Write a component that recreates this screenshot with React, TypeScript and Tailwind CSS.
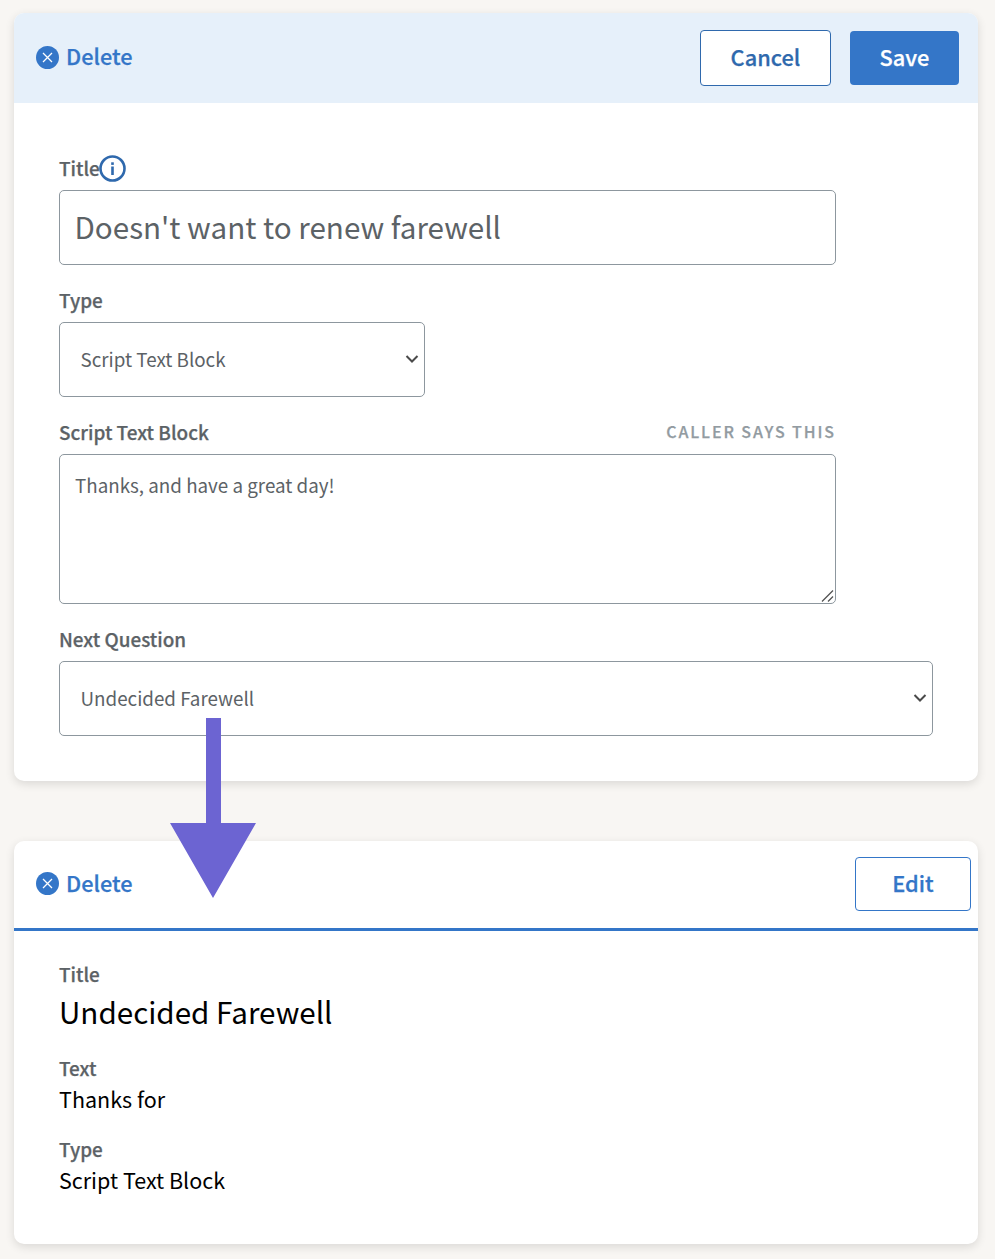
import type { ReactNode } from 'react';

const fontStack = '[font-family:"Noto_Sans_CJK_SC","Noto_Sans",sans-serif]';
const heavier = 'font-medium [-webkit-text-stroke:0.25px]';

const DeleteLink = () => (
  <button className={`mb-[2px] flex items-center gap-[7px] text-[21.7px] leading-[30px] text-[#3476c8] ${heavier}`}>
    <svg width="23" height="23" viewBox="0 0 23 23" aria-hidden="true">
      <circle cx="11.5" cy="11.5" r="11.5" fill="#3476c8" />
      <path d="M7 7l9 9M16 7l-9 9" stroke="#fff" strokeWidth="1.3" fill="none" />
    </svg>
    <span className="pb-[2px]">Delete</span>
  </button>
);

const Label = ({ children }: { children: ReactNode }) => (
  <label className={`block text-[18.9px] leading-[27px] text-[#5c6266] ${heavier}`}>{children}</label>
);

const fieldClass =
  'block h-[75px] rounded-[5px] border border-[#8d979e] bg-white text-[#5c6266] outline-none';

const Select = ({ width, value }: { width: string; value: string }) => (
  <div className={`relative ${width}`}>
    <select className={`${fieldClass} w-full appearance-none px-[20.5px] text-[18.8px]`} defaultValue={value}>
      <option value={value}>{value}</option>
    </select>
    <svg
      className="pointer-events-none absolute right-[6px] top-[32px]"
      width="14"
      height="10"
      viewBox="0 0 14 10"
      aria-hidden="true"
    >
      <path d="M1.5 2l5.5 5.5L12.5 2" fill="none" stroke="#4a4a4a" strokeWidth="2" />
    </svg>
  </div>
);

export default function App() {
  return (
    <div className={`${fontStack} relative min-h-[1259px] bg-[#f8f6f3] pl-[14px] pr-[17px] pt-[13px]`}>
      <section className="overflow-hidden rounded-[10px] bg-white pb-[45px] shadow-[0_3px_10px_rgba(0,0,0,0.12)]">
        <header className="flex h-[90px] items-center justify-between bg-[#e6f0fa] pl-[22px] pr-[19px]">
          <DeleteLink />
          <div className="flex items-center gap-[19px]">
            <button className={`h-[56px] w-[131px] rounded-[4px] border border-[#2f69ad] bg-white pb-[2px] text-[21.8px] text-[#2f69ad] ${heavier}`}>
              Cancel
            </button>
            <button className={`h-[54px] w-[109px] rounded-[4px] bg-[#3476c8] pb-[2px] text-[21.8px] text-white ${heavier}`}>
              Save
            </button>
          </div>
        </header>

        <form className="px-[45px] pt-[52px]">
          <div className="mb-[8px] flex h-[27px] items-start">
            <div className="-mr-[1px] -mt-[1px]">
              <Label>Title</Label>
            </div>
            <svg width="27" height="27" viewBox="0 0 27 27" aria-hidden="true">
              <circle cx="13.5" cy="13.5" r="12" fill="none" stroke="#2f69ad" strokeWidth="2.6" />
              <rect x="12.2" y="11.5" width="2.6" height="8.5" fill="#2f69ad" />
              <rect x="12.2" y="7.3" width="2.6" height="2.6" fill="#2f69ad" />
            </svg>
          </div>
          <input
            className={`${fieldClass} w-[777px] px-[14.5px] pb-[2px] text-[29.6px]`}
            defaultValue="Doesn't want to renew farewell"
          />

          <div className="mb-[9px] mt-[21px]">
            <Label>Type</Label>
          </div>
          <Select width="w-[366px]" value="Script Text Block" />

          <div className="mb-[9px] mt-[21px] flex w-[777px] items-center justify-between">
            <Label>Script Text Block</Label>
            <span className={`pb-[2px] text-[16px] tracking-[1.9px] text-[#929ba1] ${heavier}`}>CALLER SAYS THIS</span>
          </div>
          <div className="relative w-[777px]">
            <textarea
              className={`${fieldClass} h-[150px]! w-full resize-none px-[15px] py-[15px] text-[18.8px] leading-[30px]`}
              defaultValue="Thanks, and have a great day!"
            />
            <svg
              className="pointer-events-none absolute bottom-[1px] right-[1px]"
              width="14"
              height="14"
              viewBox="0 0 14 14"
              aria-hidden="true"
            >
              <path d="M1 12.5L12 1.5M7 12.5L12 7.5" fill="none" stroke="#555" strokeWidth="1.3" />
            </svg>
          </div>

          <div className="mb-[9px] mt-[21px]">
            <Label>Next Question</Label>
          </div>
          <Select width="w-[874px]" value="Undecided Farewell" />
        </form>
      </section>

      <section className="mt-[60px] overflow-hidden rounded-[10px] bg-white pb-[48px] shadow-[0_3px_10px_rgba(0,0,0,0.12)]">
        <header className="flex h-[90px] items-center justify-between border-b-[3px] border-[#3476c8] pl-[22px] pr-[7px]">
          <DeleteLink />
          <button className={`mb-[1px] h-[54px] w-[116px] rounded-[4px] border border-[#3476c8] bg-white pb-[2px] text-[21.8px] text-[#3476c8] ${heavier}`}>
            Edit
          </button>
        </header>
        <div className="pl-[45px] pt-[29px] text-black">
          <Label>Title</Label>
          <p className="mt-[4px] text-[29.6px] leading-[42px]">Undecided Farewell</p>
          <div className="mt-[21px]">
            <Label>Text</Label>
          </div>
          <p className="mt-[2px] text-[21.5px] leading-[32px]">Thanks for</p>
          <div className="mt-[20px]">
            <Label>Type</Label>
          </div>
          <p className="mt-[2px] text-[21.5px] leading-[32px]">Script Text Block</p>
        </div>
      </section>

      <svg
        className="absolute left-[170px] top-[718px]"
        width="86"
        height="180"
        viewBox="0 0 86 180"
        aria-hidden="true"
      >
        <path d="M36 0h15v105h35L43 180 0 105h36z" fill="#6c64d2" />
      </svg>
    </div>
  );
}
